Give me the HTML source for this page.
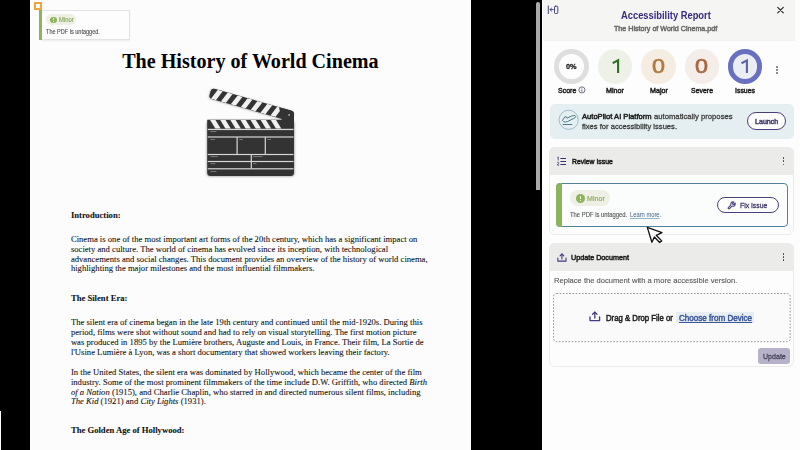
<!DOCTYPE html>
    <html><head><meta charset="utf-8"><title>Accessibility Report</title><style>
    html,body{margin:0;padding:0;width:800px;height:450px;overflow:hidden;background:#000}
    .t{position:absolute;white-space:nowrap}
    </style></head><body>
    <div style="position:absolute;left:0px;top:0px;width:800px;height:450px;background:#000"></div>
<div style="position:absolute;left:0px;top:411px;width:1.2px;height:39px;background:#fff"></div>
<div style="position:absolute;left:29.5px;top:0px;width:441.5px;height:450px;background:#fcfcfc"></div>
<div style="position:absolute;left:535.7px;top:2px;width:4.3px;height:188px;background:#a9a9a9;border-radius:2.2px 2.2px 0 0"></div>
<div style="position:absolute;left:541.8px;top:0px;width:258.2px;height:450px;background:#fdfdfd"></div>
<div style="position:absolute;left:543.1px;top:0px;width:252px;height:40.7px;background:#f5f5f3;border-bottom:1px solid #f1f1f3;box-sizing:border-box"></div>
<div class="t" style="left:-49.60px;width:600px;text-align:center;top:50.80px;font-family:'Liberation Serif', serif;font-size:20.1px;line-height:20.1px;font-weight:bold;color:#000;">The History of World Cinema</div>
<div class="t" style="left:70.90px;top:210.91px;font-family:'Liberation Serif', serif;font-size:8.65px;line-height:8.65px;font-weight:bold;color:#111;-webkit-text-stroke:0.08px #111;">Introduction:</div>
<div class="t" style="left:70.90px;top:234.91px;font-family:'Liberation Serif', serif;font-size:8.65px;line-height:8.65px;font-weight:normal;color:#111;-webkit-text-stroke:0.08px #111;">Cinema is one of the most important art forms of the 20th century, which has a significant impact on</div>
<div class="t" style="left:70.90px;top:244.76px;font-family:'Liberation Serif', serif;font-size:8.65px;line-height:8.65px;font-weight:normal;color:#111;-webkit-text-stroke:0.08px #111;">society and culture. The world of cinema has evolved since its inception, with technological</div>
<div class="t" style="left:70.90px;top:254.60px;font-family:'Liberation Serif', serif;font-size:8.65px;line-height:8.65px;font-weight:normal;color:#111;-webkit-text-stroke:0.08px #111;">advancements and social changes. This document provides an overview of the history of world cinema,</div>
<div class="t" style="left:70.90px;top:264.46px;font-family:'Liberation Serif', serif;font-size:8.65px;line-height:8.65px;font-weight:normal;color:#111;-webkit-text-stroke:0.08px #111;">highlighting the major milestones and the most influential filmmakers.</div>
<div class="t" style="left:70.90px;top:293.81px;font-family:'Liberation Serif', serif;font-size:8.65px;line-height:8.65px;font-weight:bold;color:#111;-webkit-text-stroke:0.08px #111;">The Silent Era:</div>
<div class="t" style="left:70.90px;top:318.01px;font-family:'Liberation Serif', serif;font-size:8.65px;line-height:8.65px;font-weight:normal;color:#111;-webkit-text-stroke:0.08px #111;">The silent era of cinema began in the late 19th century and continued until the mid-1920s. During this</div>
<div class="t" style="left:70.90px;top:327.85px;font-family:'Liberation Serif', serif;font-size:8.65px;line-height:8.65px;font-weight:normal;color:#111;-webkit-text-stroke:0.08px #111;">period, films were shot without sound and had to rely on visual storytelling. The first motion picture</div>
<div class="t" style="left:70.90px;top:337.71px;font-family:'Liberation Serif', serif;font-size:8.65px;line-height:8.65px;font-weight:normal;color:#111;-webkit-text-stroke:0.08px #111;">was produced in 1895 by the Lumi&egrave;re brothers, Auguste and Louis, in France. Their film, La Sortie de</div>
<div class="t" style="left:70.90px;top:347.56px;font-family:'Liberation Serif', serif;font-size:8.65px;line-height:8.65px;font-weight:normal;color:#111;-webkit-text-stroke:0.08px #111;">l'Usine Lumi&egrave;re &agrave; Lyon, was a short documentary that showed workers leaving their factory.</div>
<div class="t" style="left:70.90px;top:367.91px;font-family:'Liberation Serif', serif;font-size:8.65px;line-height:8.65px;font-weight:normal;color:#111;-webkit-text-stroke:0.08px #111;">In the United States, the silent era was dominated by Hollywood, which became the center of the film</div>
<div class="t" style="left:70.90px;top:377.76px;font-family:'Liberation Serif', serif;font-size:8.65px;line-height:8.65px;font-weight:normal;color:#111;-webkit-text-stroke:0.08px #111;">industry. Some of the most prominent filmmakers of the time include D.W. Griffith, who directed <i>Birth</i></div>
<div class="t" style="left:70.90px;top:387.60px;font-family:'Liberation Serif', serif;font-size:8.65px;line-height:8.65px;font-weight:normal;color:#111;-webkit-text-stroke:0.08px #111;"><i>of a Nation</i> (1915), and Charlie Chaplin, who starred in and directed numerous silent films, including</div>
<div class="t" style="left:70.90px;top:397.47px;font-family:'Liberation Serif', serif;font-size:8.65px;line-height:8.65px;font-weight:normal;color:#111;-webkit-text-stroke:0.08px #111;"><i>The Kid</i> (1921) and <i>City Lights</i> (1931).</div>
<div class="t" style="left:70.90px;top:426.01px;font-family:'Liberation Serif', serif;font-size:8.65px;line-height:8.65px;font-weight:bold;color:#111;-webkit-text-stroke:0.08px #111;">The Golden Age of Hollywood:</div>
<svg style="position:absolute;left:200px;top:80px" width="100" height="100" viewBox="200 80 100 100">
<defs>
<filter id="sh" x="-20%" y="-30%" width="140%" height="160%"><feGaussianBlur stdDeviation="1.1"/></filter>
<clipPath id="cb"><rect x="207.2" y="119.75" width="86.8" height="8.95"/></clipPath>
<clipPath id="ca"><rect x="0" y="0" width="74" height="10.5"/></clipPath>
</defs>
<rect x="206.7" y="120.3" width="87.8" height="56.3" rx="3.5" fill="#000" opacity="0.35" filter="url(#sh)"/>
<g transform="translate(211.5,88.0) rotate(15.8)"><rect x="-0.3" y="0.6" width="86.5" height="10.5" rx="3" fill="#000" opacity="0.3" filter="url(#sh)"/><path d="M3.2 0 H83.3 Q86.5 0 86.5 3.2 V10.5 H3.2 Q0 10.5 0 7.3 V3.2 Q0 0 3.2 0 Z" fill="#333"/><g clip-path="url(#ca)"><polygon points="6.60,0 11.70,0 7.50,10.5 2.40,10.5" fill="#f0f0f0"/><polygon points="16.90,0 22.00,0 17.80,10.5 12.70,10.5" fill="#f0f0f0"/><polygon points="27.20,0 32.30,0 28.10,10.5 23.00,10.5" fill="#f0f0f0"/><polygon points="37.50,0 42.60,0 38.40,10.5 33.30,10.5" fill="#f0f0f0"/><polygon points="47.80,0 52.90,0 48.70,10.5 43.60,10.5" fill="#f0f0f0"/><polygon points="58.10,0 63.20,0 59.00,10.5 53.90,10.5" fill="#f0f0f0"/><polygon points="68.40,0 73.50,0 69.30,10.5 64.20,10.5" fill="#f0f0f0"/></g></g>
<path d="M279 107.2 L290.2 110.3 Q294 111.4 294 115.2 V120.5 H282 Z" fill="#333"/>
<circle cx="289.1" cy="114.9" r="0.95" fill="#aaa"/>
<path d="M207.2 119.75 H294 V172.6 Q294 176.1 290.5 176.1 H210.7 Q207.2 176.1 207.2 172.6 Z" fill="#333"/>
<g clip-path="url(#cb)"><polygon points="210.00,119.75 215.30,119.75 220.80,128.7 215.50,128.7" fill="#f0f0f0"/><polygon points="220.10,119.75 225.40,119.75 230.90,128.7 225.60,128.7" fill="#f0f0f0"/><polygon points="230.20,119.75 235.50,119.75 241.00,128.7 235.70,128.7" fill="#f0f0f0"/><polygon points="240.30,119.75 245.60,119.75 251.10,128.7 245.80,128.7" fill="#f0f0f0"/><polygon points="250.40,119.75 255.70,119.75 261.20,128.7 255.90,128.7" fill="#f0f0f0"/><polygon points="260.50,119.75 265.80,119.75 271.30,128.7 266.00,128.7" fill="#f0f0f0"/><polygon points="270.60,119.75 275.90,119.75 281.40,128.7 276.10,128.7" fill="#f0f0f0"/></g>
<g fill="#d6d6d6">
<rect x="207.7" y="128.8" width="85.8" height="1.3"/>
<rect x="207.7" y="136.4" width="85.8" height="1.2"/>
<rect x="207.7" y="153.9" width="85.8" height="1.2"/>
<rect x="207.7" y="160.9" width="85.8" height="1.2"/>
<rect x="207.7" y="168.2" width="85.8" height="1.2"/>
<rect x="236.5" y="137" width="1.2" height="17"/>
<rect x="264.7" y="137" width="1.2" height="17"/>
<rect x="250.7" y="154.5" width="1.2" height="14"/>
</g>
<g fill="#8a8a8a">
<rect x="210.4" y="131.3" width="6" height="0.8"/>
<rect x="210.4" y="139" width="4.5" height="0.8"/><rect x="239.3" y="139" width="3.5" height="0.8"/><rect x="267.4" y="139" width="3.5" height="0.8"/>
<rect x="210.4" y="156.3" width="7.5" height="0.8"/><rect x="253" y="156.3" width="9.5" height="0.8"/>
<rect x="210.4" y="163.3" width="5" height="0.8"/><rect x="253" y="163.3" width="3.5" height="0.8"/>
<rect x="210.4" y="171.1" width="6" height="0.8"/>
</g>
</svg>
<div style="position:absolute;left:41px;top:10px;width:88.5px;height:29.5px;background:#fdfdfd;border:1px solid #e3e3e3;box-sizing:border-box;box-shadow:0 1px 1.5px rgba(0,0,0,0.07)"></div>
<div style="position:absolute;left:39.0px;top:9.4px;width:2.7px;height:30.3px;background:#8db35c"></div>
<div style="position:absolute;left:34.3px;top:2.0px;width:7.5px;height:7.6px;border:2.1px solid #f2a43c;background:#fdfdfd;box-sizing:border-box"></div>
<div style="position:absolute;left:46.2px;top:13.7px;width:30px;height:11.3px;background:#eef0e6;border-radius:6px"></div>
<div style="position:absolute;left:50.1px;top:16.5px;width:6.7px;height:6.7px;background:#8db35c;border-radius:50%"></div>
<div style="position:absolute;left:53.15px;top:17.9px;width:0.6px;height:2.4px;background:#e8f0dc"></div>
<div style="position:absolute;left:53.15px;top:20.9px;width:0.6px;height:0.6px;background:#e8f0dc"></div>
<div class="t" style="left:58.80px;top:17.10px;font-family:'Liberation Sans', sans-serif;font-size:6.6px;line-height:6.6px;font-weight:normal;color:#7fa450;transform:scaleX(0.8848);transform-origin:0 0;-webkit-text-stroke-width:0.12px;">Minor</div>
<div class="t" style="left:46.20px;top:28.81px;font-family:'Liberation Sans', sans-serif;font-size:6.4px;line-height:6.4px;font-weight:normal;color:#505050;transform:scaleX(0.8670);transform-origin:0 0;-webkit-text-stroke-width:0.12px;">The PDF is untagged.</div>
<div class="t" style="left:620.80px;top:9.80px;font-family:'Liberation Sans', sans-serif;font-size:10.6px;line-height:10.6px;font-weight:bold;color:#3a2a7c;transform:scaleX(0.8816);transform-origin:0 0;">Accessibility Report</div>
<div class="t" style="left:614.20px;top:24.91px;font-family:'Liberation Sans', sans-serif;font-size:7.6px;line-height:7.6px;font-weight:normal;color:#686868;transform:scaleX(0.9380);transform-origin:0 0;-webkit-text-stroke-width:0.5px;">The History of World Cinema.pdf</div>
<svg style="position:absolute;left:547px;top:5px" width="12" height="10" viewBox="0 0 12 10">
<g fill="none" stroke="#3d3a78" stroke-width="0.95" stroke-linecap="round">
<path d="M1.3 0.9 V8.6"/><path d="M3 4.6 H6.2"/><path d="M4.5 3.2 L3 4.6 L4.5 6"/>
<rect x="7.5" y="1.2" width="3.3" height="7.3" rx="0.9"/>
</g></svg>
<svg style="position:absolute;left:776px;top:6px" width="9" height="9" viewBox="0 0 9 9">
<path d="M1.7 1.3 L7.3 6.9 M7.3 1.3 L1.7 6.9" stroke="#1a1a1a" stroke-width="1.05" stroke-linecap="round"/></svg>
<div style="position:absolute;left:554.4px;top:49.2px;width:34.6px;height:34.6px;background:#fdfdfd;border-radius:50%;box-sizing:border-box;border:5.2px solid #dedede;"></div>
<div style="position:absolute;left:597.9px;top:49.2px;width:34.6px;height:34.6px;background:#eef1e8;border-radius:50%;box-sizing:border-box;"></div>
<div style="position:absolute;left:641.4px;top:49.2px;width:34.6px;height:34.6px;background:#f6ede2;border-radius:50%;box-sizing:border-box;"></div>
<div style="position:absolute;left:684.6px;top:49.2px;width:34.6px;height:34.6px;background:#f4ede9;border-radius:50%;box-sizing:border-box;"></div>
<div style="position:absolute;left:727.7px;top:49.2px;width:34.6px;height:34.6px;background:#eceef6;border-radius:50%;box-sizing:border-box;border:5.2px solid #6871bf;"></div>
<div class="t" style="left:566.40px;top:63.00px;font-family:'Liberation Sans', sans-serif;font-size:7.4px;line-height:7.4px;font-weight:bold;color:#1a1a1a;transform:scaleX(0.9918);transform-origin:0 0;-webkit-text-stroke-width:0.28px;">0%</div>
<svg style="position:absolute;left:608px;top:56px" width="16" height="20" viewBox="608 56 16 20"><path d="M612.7 63.1 L618.1 60.2 V73" fill="none" stroke="#2e6e22" stroke-width="2.1" stroke-linejoin="miter"/></svg>
<div class="t" style="left:651.90px;top:57.10px;font-family:'Liberation Sans', sans-serif;font-size:19.6px;line-height:19.6px;font-weight:normal;color:#b07a40;transform:scaleX(1.1920);transform-origin:0 0;-webkit-text-stroke:0.6px #b07a40">0</div>
<div class="t" style="left:695.00px;top:57.10px;font-family:'Liberation Sans', sans-serif;font-size:19.6px;line-height:19.6px;font-weight:normal;color:#aa6640;transform:scaleX(1.1920);transform-origin:0 0;-webkit-text-stroke:0.6px #aa6640">0</div>
<svg style="position:absolute;left:736px;top:56px" width="16" height="20" viewBox="736 56 16 20"><path d="M741.5 63.3 L746.9 60.4 V73" fill="none" stroke="#5b63a8" stroke-width="2.1" stroke-linejoin="miter"/></svg>
<div class="t" style="left:558.30px;top:86.50px;font-family:'Liberation Sans', sans-serif;font-size:7.9px;line-height:7.9px;font-weight:normal;color:#1e1e1e;transform:scaleX(0.8873);transform-origin:0 0;-webkit-text-stroke-width:0.5px;">Score</div>
<svg style="position:absolute;left:577.8px;top:85.8px" width="8" height="8" viewBox="0 0 8 8">
<circle cx="3.9" cy="3.9" r="3.05" fill="none" stroke="#444466" stroke-width="0.75"/><path d="M3.9 3.4 V5.7" stroke="#444466" stroke-width="0.75"/><circle cx="3.9" cy="2.3" r="0.45" fill="#444466"/></svg>
<div class="t" style="left:606.10px;top:86.50px;font-family:'Liberation Sans', sans-serif;font-size:7.9px;line-height:7.9px;font-weight:normal;color:#1e1e1e;transform:scaleX(0.9121);transform-origin:0 0;-webkit-text-stroke-width:0.5px;">Minor</div>
<div class="t" style="left:649.55px;top:86.50px;font-family:'Liberation Sans', sans-serif;font-size:7.9px;line-height:7.9px;font-weight:normal;color:#1e1e1e;transform:scaleX(0.9070);transform-origin:0 0;-webkit-text-stroke-width:0.5px;">Major</div>
<div class="t" style="left:690.90px;top:86.50px;font-family:'Liberation Sans', sans-serif;font-size:7.9px;line-height:7.9px;font-weight:normal;color:#1e1e1e;transform:scaleX(0.8795);transform-origin:0 0;-webkit-text-stroke-width:0.5px;">Severe</div>
<div class="t" style="left:734.90px;top:86.50px;font-family:'Liberation Sans', sans-serif;font-size:7.9px;line-height:7.9px;font-weight:normal;color:#1e1e1e;transform:scaleX(0.8767);transform-origin:0 0;-webkit-text-stroke-width:0.5px;">Issues</div>
<div style="position:absolute;left:776.25px;top:65.95px;width:1.9px;height:1.9px;background:#666;border-radius:50%"></div>
<div style="position:absolute;left:776.25px;top:69.0px;width:1.9px;height:1.9px;background:#666;border-radius:50%"></div>
<div style="position:absolute;left:776.25px;top:72.05px;width:1.9px;height:1.9px;background:#666;border-radius:50%"></div>
<div style="position:absolute;left:549.7px;top:103.5px;width:244.3px;height:35.7px;background:#e5eff1;border-radius:5px"></div>
<svg style="position:absolute;left:558px;top:109px" width="22" height="22" viewBox="0 0 22 22">
<circle cx="10.7" cy="10.8" r="9.6" fill="none" stroke="#8fb0ba" stroke-width="0.8"/>
<g fill="none" stroke="#4e7b86" stroke-width="1" stroke-linejoin="round" stroke-linecap="round">
<path d="M4.6 11.2 L6.9 7.7 L8.7 8.1 L8.9 9.2 L13 7.3 L15.6 6.4 Q17.4 6.1 17.7 7.6 Q17.6 8.6 15.8 9.4 L9.6 12.5 Q7.2 13.5 5.8 12.8 Z"/>
<path d="M5.1 15.5 H13.8"/>
</g></svg>
<div class="t" style="left:582.40px;top:112.51px;font-family:'Liberation Sans', sans-serif;font-size:8.0px;line-height:8.0px;font-weight:normal;color:#1a1a1a;transform:scaleX(0.9486);transform-origin:0 0;-webkit-text-stroke-width:0.5px;">AutoPilot AI Platform</div>
<div class="t" style="left:654.40px;top:112.50px;font-family:'Liberation Sans', sans-serif;font-size:7.9px;line-height:7.9px;font-weight:normal;color:#3a3a3a;transform:scaleX(0.9739);transform-origin:0 0;-webkit-text-stroke-width:0.28px;">automatically proposes</div>
<div class="t" style="left:582.40px;top:123.31px;font-family:'Liberation Sans', sans-serif;font-size:7.9px;line-height:7.9px;font-weight:normal;color:#3a3a3a;transform:scaleX(0.9628);transform-origin:0 0;-webkit-text-stroke-width:0.28px;">fixes for accessibility issues.</div>
<div style="position:absolute;left:746.8px;top:112.4px;width:39.2px;height:17.3px;background:#fdfdfd;border:1.7px solid #4b3e7e;border-radius:9px;box-sizing:border-box"></div>
<div class="t" style="left:754.80px;top:118.91px;font-family:'Liberation Sans', sans-serif;font-size:6.8px;line-height:6.8px;font-weight:normal;color:#46416e;transform:scaleX(1.0443);transform-origin:0 0;-webkit-text-stroke-width:0.5px;">Launch</div>
<div style="position:absolute;left:549.1px;top:146.9px;width:244.9px;height:88px;background:#fdfdfd;border:1px solid #ececec;border-radius:6px;box-sizing:border-box"></div>
<div style="position:absolute;left:549.1px;top:146.9px;width:244.9px;height:28px;background:#ebebea;border-radius:6px 6px 0 0"></div>
<svg style="position:absolute;left:556px;top:156px" width="12" height="11" viewBox="0 0 12 11">
<g fill="none" stroke="#35346e" stroke-width="1" stroke-linecap="butt">
<path d="M4.4 2.5 H10 M4.4 5.5 H10 M4.4 8.5 H10"/>
<path d="M1.5 1.4 L2.2 0.9 V4.4" stroke-width="0.8"/><path d="M1.2 6.6 Q1.6 6 2.3 6.1 Q3 6.4 2.6 7.2 L1.3 9.1 H3.1" stroke-width="0.8"/>
</g></svg>
<div class="t" style="left:571.60px;top:157.61px;font-family:'Liberation Sans', sans-serif;font-size:7.7px;line-height:7.7px;font-weight:normal;color:#1a1a1a;transform:scaleX(0.8924);transform-origin:0 0;-webkit-text-stroke-width:0.5px;">Review Issue</div>
<div style="position:absolute;left:782.55px;top:157.25px;width:1.9px;height:1.9px;background:#3a3a3a;border-radius:50%"></div>
<div style="position:absolute;left:782.55px;top:160.4px;width:1.9px;height:1.9px;background:#3a3a3a;border-radius:50%"></div>
<div style="position:absolute;left:782.55px;top:163.55px;width:1.9px;height:1.9px;background:#3a3a3a;border-radius:50%"></div>
<div style="position:absolute;left:556px;top:183.3px;width:232px;height:43.6px;background:#fbfcfc;border:1.5px solid #52829a;border-radius:4px;box-sizing:border-box"></div>
<div style="position:absolute;left:556px;top:183.3px;width:5.8px;height:43.6px;background:#8db35c;border-radius:4px 0 0 4px"></div>
<div style="position:absolute;left:570.3px;top:190.4px;width:39.5px;height:15.4px;background:#eef0e5;border-radius:8px"></div>
<div style="position:absolute;left:575.6px;top:193.7px;width:9.1px;height:9.1px;background:#8db35c;border-radius:50%"></div>
<div style="position:absolute;left:579.7px;top:195.6px;width:1.1px;height:3.4px;background:#fff;border-radius:0.5px"></div>
<div style="position:absolute;left:579.7px;top:199.6px;width:1.1px;height:1.1px;background:#fff;border-radius:50%"></div>
<div class="t" style="left:587.30px;top:194.80px;font-family:'Liberation Sans', sans-serif;font-size:7.0px;line-height:7.0px;font-weight:normal;color:#86a956;transform:scaleX(1.0162);transform-origin:0 0;-webkit-text-stroke-width:0.12px;">Minor</div>
<div class="t" style="left:570.30px;top:211.61px;font-family:'Liberation Sans', sans-serif;font-size:6.5px;line-height:6.5px;font-weight:normal;color:#555;transform:scaleX(0.9046);transform-origin:0 0;-webkit-text-stroke-width:0.12px;">The PDF is untagged.</div>
<div class="t" style="left:629.80px;top:211.60px;font-family:'Liberation Sans', sans-serif;font-size:6.6px;line-height:6.6px;font-weight:normal;color:#3d5f86;transform:scaleX(0.8774);transform-origin:0 0;text-decoration:underline;text-decoration-color:#8fb6c8;text-underline-offset:0.8px">Learn more</div>
<div class="t" style="left:659.50px;top:211.60px;font-family:'Liberation Sans', sans-serif;font-size:6.6px;line-height:6.6px;font-weight:normal;color:#555;">.</div>
<div style="position:absolute;left:717px;top:196.6px;width:62.2px;height:16.5px;background:#fdfdfd;border:1.8px solid #4b4279;border-radius:8.5px;box-sizing:border-box"></div>
<svg style="position:absolute;left:726.8px;top:200.6px" width="9" height="9" viewBox="0 0 24 24">
<path d="M14.7 6.3a1 1 0 0 0 0 1.4l1.6 1.6a1 1 0 0 0 1.4 0l3.77-3.77a6 6 0 0 1-7.94 7.94l-6.91 6.91a2.12 2.12 0 0 1-3-3l6.91-6.91a6 6 0 0 1 7.94-7.94l-3.76 3.76z" fill="none" stroke="#4b4279" stroke-width="2.9" stroke-linejoin="round" stroke-linecap="round"/></svg>
<div class="t" style="left:740.00px;top:201.81px;font-family:'Liberation Sans', sans-serif;font-size:7.6px;line-height:7.6px;font-weight:normal;color:#3d3566;transform:scaleX(0.8950);transform-origin:0 0;-webkit-text-stroke-width:0.28px;">Fix Issue</div>
<svg style="position:absolute;left:636px;top:218px" width="30" height="30" viewBox="0 0 30 30">
<path d="M11.3 9.4 L26 14.6 L20.2 17.3 L25.7 22.9 L23.6 24.5 L18.4 19 L15.9 24.2 Z" fill="#fff" stroke="#151515" stroke-width="1.35" stroke-linejoin="round"/></svg>
<div style="position:absolute;left:549.3px;top:243.1px;width:244.6px;height:124px;background:#fdfdfd;border:1px solid #ececec;border-radius:6px;box-sizing:border-box"></div>
<div style="position:absolute;left:549.3px;top:243.1px;width:244.6px;height:27.5px;background:#ebebea;border-radius:6px 6px 0 0"></div>
<svg style="position:absolute;left:556.6px;top:252.6px" width="10.2" height="9.35" viewBox="0 0 12 11">
<g fill="none" stroke="#433a82" stroke-width="1.3" stroke-linecap="round" stroke-linejoin="round">
<path d="M1 6 V9.6 H10.6 V6"/><path d="M5.8 7 V1.2"/><path d="M3.6 3.3 L5.8 1.1 L8 3.3"/>
</g></svg>
<div class="t" style="left:571.10px;top:253.51px;font-family:'Liberation Sans', sans-serif;font-size:7.7px;line-height:7.7px;font-weight:normal;color:#1a1a1a;transform:scaleX(0.9343);transform-origin:0 0;-webkit-text-stroke-width:0.5px;">Update Document</div>
<div style="position:absolute;left:782.55px;top:253.05px;width:1.9px;height:1.9px;background:#3a3a3a;border-radius:50%"></div>
<div style="position:absolute;left:782.55px;top:256.2px;width:1.9px;height:1.9px;background:#3a3a3a;border-radius:50%"></div>
<div style="position:absolute;left:782.55px;top:259.35px;width:1.9px;height:1.9px;background:#3a3a3a;border-radius:50%"></div>
<div class="t" style="left:554.00px;top:277.11px;font-family:'Liberation Sans', sans-serif;font-size:8.0px;line-height:8.0px;font-weight:normal;color:#585858;transform:scaleX(0.9476);transform-origin:0 0;-webkit-text-stroke-width:0.12px;">Replace the document with a more accessible version.</div>
<div style="position:absolute;left:553px;top:292.5px;width:237.7px;height:49.2px;background:#fafafb;border-radius:3px"></div>
<svg style="position:absolute;left:553px;top:292.5px" width="238" height="50" viewBox="0 0 238 50"><rect x="0.5" y="0.5" width="236.7" height="48.2" rx="3" fill="none" stroke="#8c8c8c" stroke-width="0.9" stroke-dasharray="1.6 1.6"/></svg>
<svg style="position:absolute;left:589.3px;top:311.2px" width="12.0" height="11.0" viewBox="0 0 12 11">
<g fill="none" stroke="#433a82" stroke-width="1.3" stroke-linecap="round" stroke-linejoin="round">
<path d="M1 6 V9.6 H10.6 V6"/><path d="M5.8 7 V1.2"/><path d="M3.6 3.3 L5.8 1.1 L8 3.3"/>
</g></svg>
<div class="t" style="left:606.40px;top:313.60px;font-family:'Liberation Sans', sans-serif;font-size:8.6px;line-height:8.6px;font-weight:normal;color:#1e1e1e;transform:scaleX(0.9037);transform-origin:0 0;-webkit-text-stroke-width:0.5px;">Drag &amp; Drop File or</div>
<div style="position:absolute;left:676.2px;top:312px;width:78.2px;height:11px;background:#e6eef0"></div>
<div class="t" style="left:679.00px;top:313.60px;font-family:'Liberation Sans', sans-serif;font-size:8.6px;line-height:8.6px;font-weight:normal;color:#3f579c;transform:scaleX(0.9389);transform-origin:0 0;-webkit-text-stroke-width:0.5px;text-decoration:underline;text-underline-offset:1px">Choose from Device</div>
<div style="position:absolute;left:758.2px;top:348.2px;width:32px;height:16.1px;background:#b8b1ca;border-radius:3px"></div>
<div class="t" style="left:763.00px;top:353.10px;font-family:'Liberation Sans', sans-serif;font-size:7.6px;line-height:7.6px;font-weight:normal;color:#45455a;transform:scaleX(0.9306);transform-origin:0 0;-webkit-text-stroke-width:0.28px;">Update</div>
</body></html>
